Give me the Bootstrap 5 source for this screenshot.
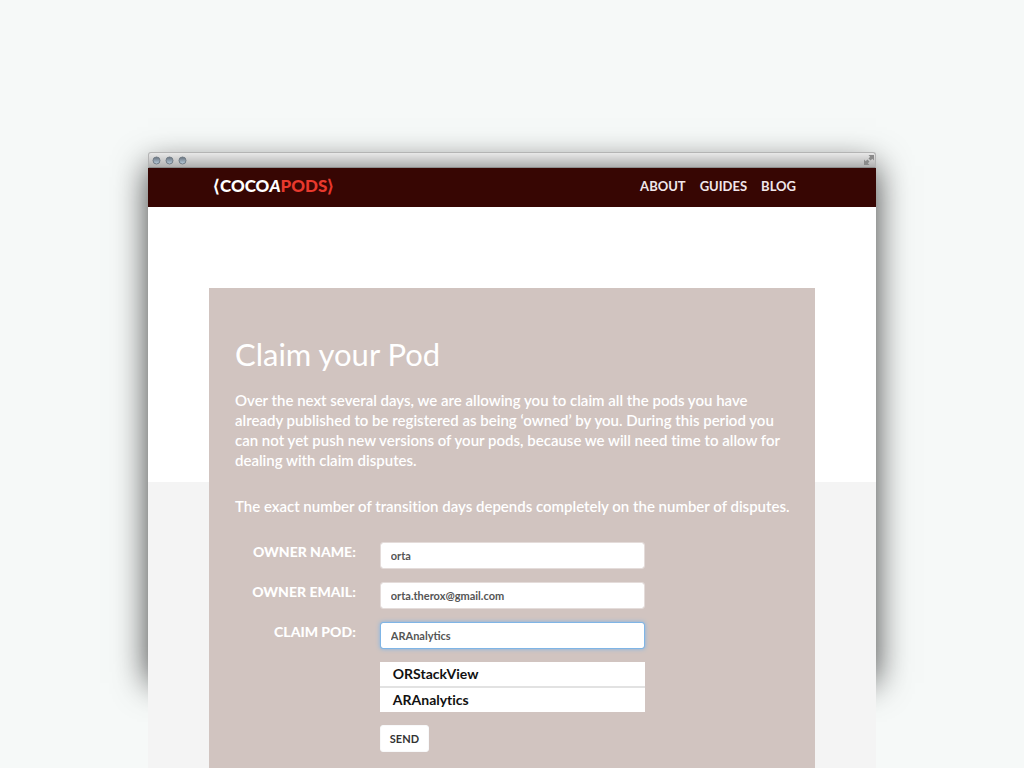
<!DOCTYPE html>
<html lang="en">
<head>
<meta charset="utf-8">
<meta name="viewport" content="width=device-width, initial-scale=1">
<title>Claim your Pod</title>
<link href="https://cdn.jsdelivr.net/npm/bootstrap@5.3.0/dist/css/bootstrap.min.css" rel="stylesheet">
<style>
  body { background: #f6f9f8; font-family: Lato, "Open Sans", sans-serif; font-variant-ligatures: none; }
  .stage { padding-top: 152px; }
  .browser { width: 71.1%; isolation: isolate; }
  /* shadow of the window frame, shorter than the page it holds */
  .frame-shadow { position: absolute; inset: 14px 0 auto; height: 517px; z-index: -1; box-shadow: 0 0 32px rgba(0,0,0,.75); }
  .titlebar { height: 16px; padding: 0 1px 0 3px; border-radius: 3px 3px 0 0; background: linear-gradient(#e8e8e8, #b0b0b0); border: 1px solid #b4b4b4; border-bottom-color: #8c8c8c; }
  .topnav { height: 39px; padding: 0 80px 3px 65px; background: #370603; }
  .logo { font-size: 17px; line-height: 20px; font-weight: 900; color: #fff; }
  .logo-red { color: #e8392d; }
  .logo-slant { font-style: italic; }
  .menu-list { gap: 14px; }
  .menu-link { font-size: 13px; line-height: 20px; font-weight: 700; color: #f0e6ea; }
  .page-body { padding: 81px 61px 0; background: linear-gradient(#fff 275px, #f4f4f4 275px); }
  .panel { padding: 47px 18px 17px 26px; background: #d1c4c0; color: #fff; }
  .panel-title { font-size: 31px; line-height: 38px; font-weight: 400; margin-bottom: 17px; }
  .copy { font-size: 15px; line-height: 20px; font-weight: 600; margin-bottom: 26px; }
  .form-line { display: grid; grid-template-columns: 21.5% 47.1%; column-gap: 24px; margin-bottom: 13px; }
  .field-label { font-size: 14px; line-height: 20px; font-weight: 900; text-align: right; white-space: nowrap; }
  .field { height: 27px; padding: 0 10px; font-size: 11px; font-weight: 700; color: #555; border-color: #e4dcda; border-radius: 3px; }
  .field.active, .field:focus { border-color: #7fb5e6; box-shadow: 0 0 4px #7fb5e6; }
  .pod { padding: 0 13px; font-size: 14px; line-height: 24px; font-weight: 700; color: #111; }
  .pod + .pod { border-top: 2px solid #e2e2e2; }
  .send { height: 27px; padding: 0 9px; font-size: 11px; font-weight: 700; color: #333; border-radius: 3px; }
</style>
</head>
<body>
<div class="stage min-vh-100 d-flex flex-column align-items-center">
  <div class="browser position-relative flex-grow-1 d-flex flex-column">
    <div class="frame-shadow"></div>
    <div class="titlebar d-flex align-items-center justify-content-between">
      <svg width="36" height="11" viewBox="0 0 36 11" aria-hidden="true">
        <defs><linearGradient id="bead" x2="0" y2="1"><stop stop-color="#66707c"/><stop offset="1" stop-color="#b9cddd"/></linearGradient></defs>
        <g fill="url(#bead)" stroke="#737d87"><circle cx="4.500" cy="5.500" r="3.500"/><circle cx="17.500" cy="5.500" r="3.500"/><circle cx="30.500" cy="5.500" r="3.500"/></g>
      </svg>
      <svg width="10" height="10" viewBox="0 0 10 10" fill="#8a8a8a" aria-hidden="true">
        <path d="M4.500 0H10v5.500L8.300 3.800 6.600 5.500 4.500 3.400 6.200 1.700zM0 4.500l1.700 1.700L3.400 4.500 5.500 6.600 3.800 8.300 5.500 10H0z"/>
      </svg>
    </div>
    <nav class="topnav d-flex align-items-center justify-content-between">
      <a class="logo text-decoration-none" href="#">⟨COCO<span class="logo-slant">A</span><span class="logo-red">PODS⟩</span></a>
      <div class="d-flex menu-list">
        <a class="menu-link text-decoration-none" href="#">ABOUT</a>
        <a class="menu-link text-decoration-none" href="#">GUIDES</a>
        <a class="menu-link text-decoration-none" href="#">BLOG</a>
      </div>
    </nav>
    <main class="page-body flex-grow-1 d-flex flex-column">
      <section class="panel flex-grow-1">
        <h1 class="panel-title">Claim your Pod</h1>
        <p class="copy">Over the next several days, we are allowing you to claim all the pods you have already published to be registered as being ‘owned’ by you. During this period you can not yet push new versions of your pods, because we will need time to allow for dealing with claim disputes.</p>
        <p class="copy">The exact number of transition days depends completely on the number of disputes.</p>
        <form>
          <div class="form-line">
            <label class="field-label" for="owner">OWNER NAME:</label>
            <input class="form-control field" id="owner" type="text" value="orta">
          </div>
          <div class="form-line">
            <label class="field-label" for="email">OWNER EMAIL:</label>
            <input class="form-control field" id="email" type="email" value="orta.therox@gmail.com">
          </div>
          <div class="form-line">
            <label class="field-label" for="pod">CLAIM POD:</label>
            <input class="form-control field active" id="pod" type="text" value="ARAnalytics">
          </div>
          <div class="form-line">
            <span></span>
            <div class="bg-white">
              <div class="pod">ORStackView</div>
              <div class="pod">ARAnalytics</div>
            </div>
          </div>
          <div class="form-line mb-0">
            <span></span>
            <div><button class="btn btn-light bg-white send" type="button">SEND</button></div>
          </div>
        </form>
      </section>
    </main>
  </div>
</div>
<script src="https://cdn.jsdelivr.net/npm/bootstrap@5.3.0/dist/js/bootstrap.bundle.min.js"></script>
</body>
</html>
